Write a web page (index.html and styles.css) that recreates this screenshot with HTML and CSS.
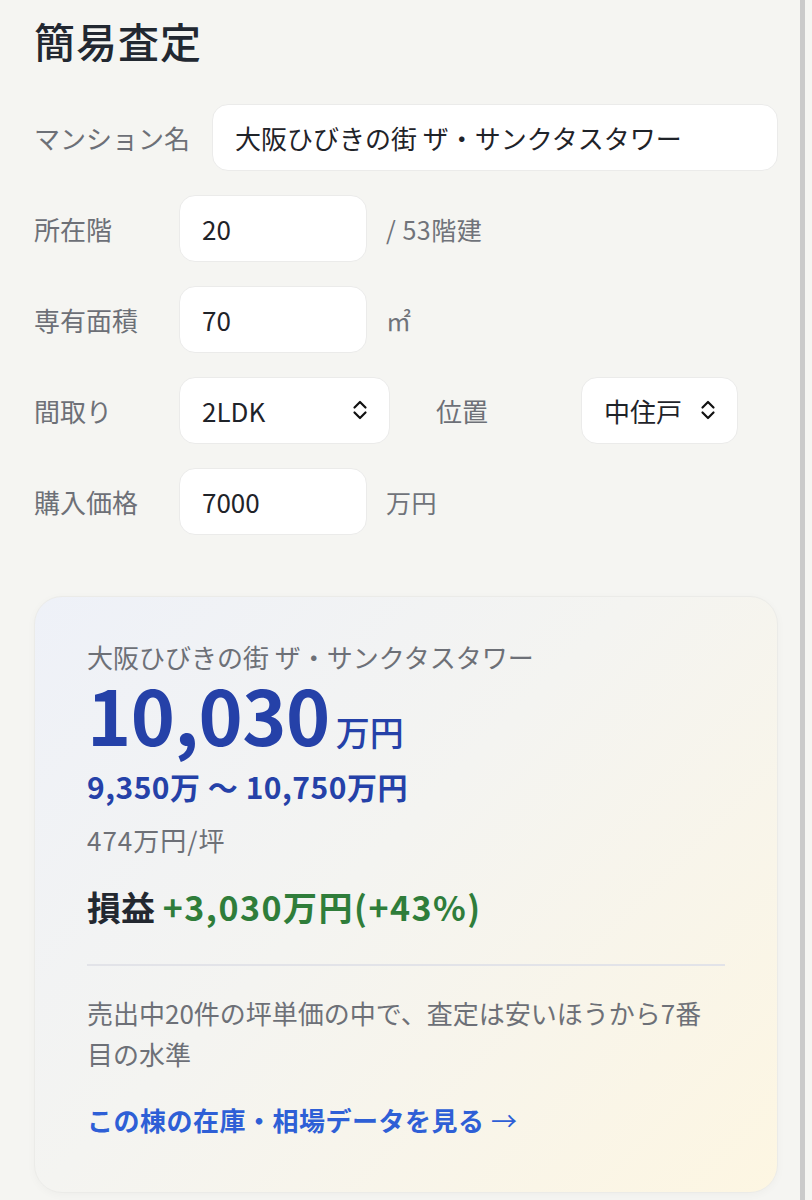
FILE: index.html
```html
<!DOCTYPE html>
<html lang="ja">
<head>
    <meta charset="UTF-8">
    <meta name="viewport" content="width=device-width, initial-scale=1.0">
    <title>簡易査定</title>
    <link rel="stylesheet" href="styles.css">
</head>
<body>
    <div class="page">
        <h1>簡易査定</h1>

        <div class="form">
            <div class="row">
                <label class="label">マンション名</label>
                <input class="field field-wide" type="text" value="大阪ひびきの街 ザ・サンクタスタワー">
            </div>
            <div class="row">
                <label class="label">所在階</label>
                <input class="field" type="text" value="20">
                <span class="suffix">/ 53階建</span>
            </div>
            <div class="row">
                <label class="label">専有面積</label>
                <input class="field" type="text" value="70">
                <span class="suffix">㎡</span>
            </div>
            <div class="row">
                <label class="label">間取り</label>
                <div class="select-wrap select-layout">
                    <select class="select">
                        <option>2LDK</option>
                    </select>
                    <svg class="chevron" viewBox="0 0 16 22" width="16" height="22"><path d="M2.5 8.5 L8 3 L13.5 8.5 M2.5 13.5 L8 19 L13.5 13.5" fill="none" stroke="#111" stroke-width="2.2" stroke-linecap="round" stroke-linejoin="round"/></svg>
                </div>
                <label class="label label-second">位置</label>
                <div class="select-wrap select-position">
                    <select class="select">
                        <option>中住戸</option>
                    </select>
                    <svg class="chevron" viewBox="0 0 16 22" width="16" height="22"><path d="M2.5 8.5 L8 3 L13.5 8.5 M2.5 13.5 L8 19 L13.5 13.5" fill="none" stroke="#111" stroke-width="2.2" stroke-linecap="round" stroke-linejoin="round"/></svg>
                </div>
            </div>
            <div class="row">
                <label class="label">購入価格</label>
                <input class="field" type="text" value="7000">
                <span class="suffix">万円</span>
            </div>
        </div>

        <div class="result">
            <div class="result-name">大阪ひびきの街 ザ・サンクタスタワー</div>
            <div class="result-price"><span class="price-num">10,030</span><span class="price-unit">万円</span></div>
            <div class="result-range">9,350万 〜 10,750万円</div>
            <div class="result-tsubo">474万円/坪</div>
            <div class="result-profit"><span class="profit-label">損益</span> <span class="profit-value">+3,030万円(+43%)</span></div>
            <hr class="divider">
            <p class="result-note">売出中20件の坪単価の中で、査定は安いほうから7番目の水準</p>
            <a class="result-link" href="#">この棟の在庫・相場データを見る <span class="arrow">→</span></a>
        </div>
    </div>
</body>
</html>
```

FILE: styles.css
```css
html, body {
    margin: 0;
    padding: 0;
    background-color: #f5f5f2;
}

body {
    font-family: "Noto Sans CJK JP", "Noto Sans", sans-serif;
    color: #1f2329;
}

.page {
    width: 805px;
    height: 1200px;
    box-sizing: border-box;
    padding: 12px 0 0 34px;
    border-right: 5px solid #cacaca;
    overflow: hidden;
}

h1 {
    margin: 0;
    font-size: 41px;
    line-height: 56px;
    font-weight: 500;
    color: #222831;
    letter-spacing: 1px;
}

.form {
    margin-top: 36px;
    display: flex;
    flex-direction: column;
    gap: 24px;
}

.row {
    display: flex;
    align-items: center;
    gap: 18px;
    height: 67px;
}

.label {
    min-width: 127px;
    font-size: 26px;
    color: #6d7077;
    white-space: nowrap;
}

.label-second {
    margin-left: 28px;
}

.field {
    width: 188px;
    height: 67px;
    box-sizing: border-box;
    padding: 0 22px;
    border: 1.5px solid #ebebea;
    border-radius: 16px;
    background-color: #fff;
    font-family: inherit;
    font-size: 26px;
    color: #1f2329;
    outline: none;
}

.field-wide {
    width: 566px;
    margin-left: 4px;
}

.suffix {
    font-size: 25px;
    color: #70737a;
    margin-left: 1px;
    letter-spacing: 0.5px;
}

.select-wrap {
    position: relative;
    height: 67px;
}

.select-layout {
    width: 211px;
}

.select-position {
    width: 157px;
}

.select {
    appearance: none;
    -webkit-appearance: none;
    width: 100%;
    height: 100%;
    box-sizing: border-box;
    padding: 0 22px;
    border: 1.5px solid #ebebea;
    border-radius: 16px;
    background-color: #fff;
    font-family: inherit;
    font-size: 26px;
    color: #1f2329;
    outline: none;
}

.chevron {
    position: absolute;
    right: 22px;
    top: 22px;
    pointer-events: none;
}

.result {
    margin-top: 61px;
    width: 744px;
    box-sizing: border-box;
    padding: 42px 52px 54px;
    border: 1px solid #ebebe8;
    border-radius: 28px;
    background: linear-gradient(135deg, #eef1f8 0%, #f4f4f1 45%, #fdf6e2 100%);
    box-shadow: 0 2px 8px rgba(0, 0, 0, 0.03);
}

.result-name {
    font-size: 26px;
    line-height: 36px;
    color: #6d7077;
}

.result-price {
    color: #2541a8;
    line-height: 78px;
    height: 78px;
    white-space: nowrap;
}

.price-num {
    font-size: 75px;
    font-weight: 700;
    letter-spacing: -0.5px;
}

.price-unit {
    font-size: 34px;
    font-weight: 500;
    margin-left: 6px;
}

.result-range {
    margin-top: 14px;
    font-size: 30px;
    line-height: 39px;
    font-weight: 700;
    color: #2541a8;
    letter-spacing: 0.5px;
}

.result-tsubo {
    margin-top: 16px;
    font-size: 26px;
    line-height: 36px;
    color: #6d7077;
    letter-spacing: 1px;
}

.result-profit {
    margin-top: 25px;
    font-size: 34px;
    line-height: 47px;
    font-weight: 700;
}

.profit-label {
    color: #232830;
}

.profit-value {
    color: #2f7d3a;
    letter-spacing: 1.5px;
}

.divider {
    margin: 34px 0 0;
    border: none;
    height: 2px;
    background-color: #e2e3e8;
}

.result-note {
    margin: 26px 0 0;
    font-size: 26px;
    line-height: 41px;
    color: #6d7077;
}

.result-link {
    display: block;
    margin-top: 28px;
    font-size: 26px;
    line-height: 36px;
    font-weight: 700;
    color: #2e5fd6;
    text-decoration: none;
    letter-spacing: 0.5px;
}

.arrow {
    font-weight: 400;
}
```
